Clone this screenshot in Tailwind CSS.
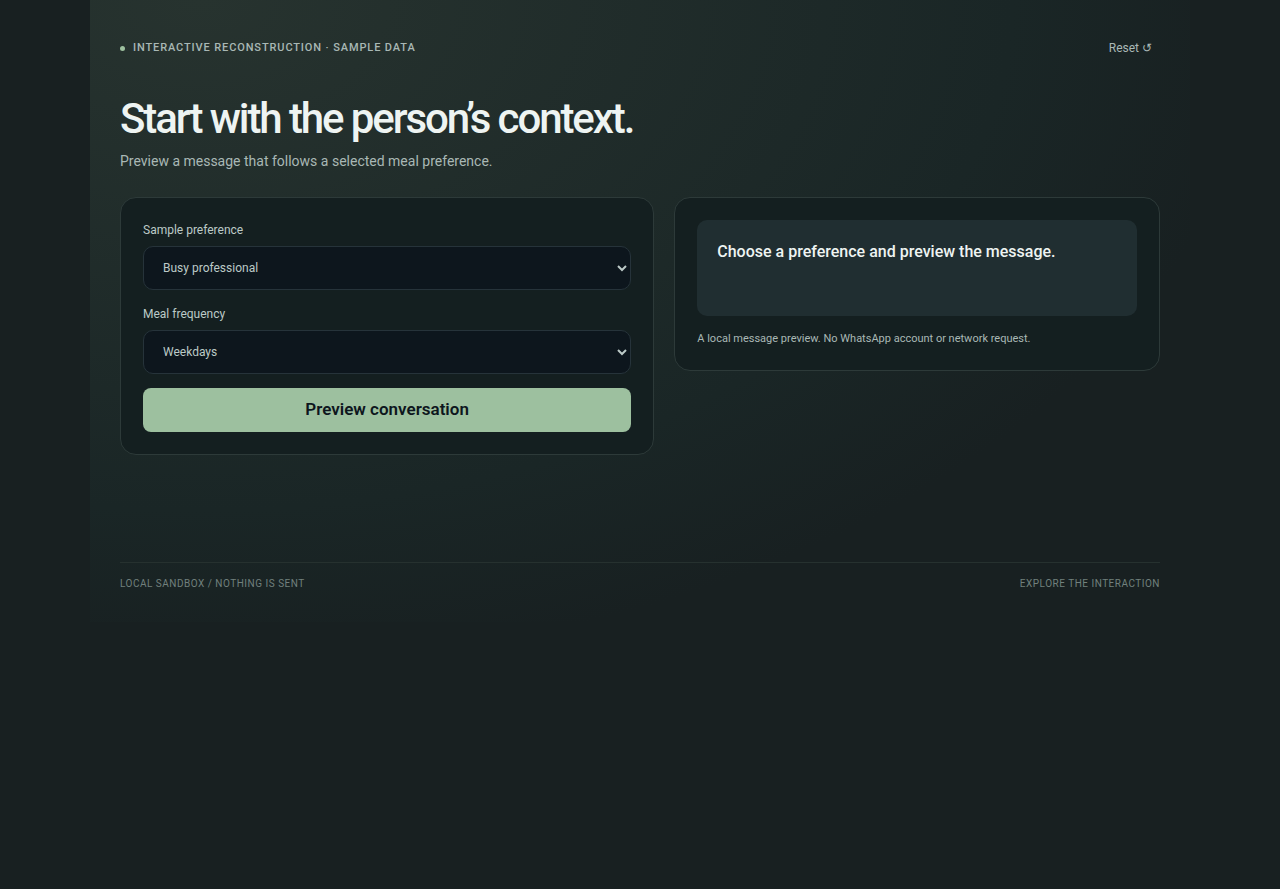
<!DOCTYPE html>
<html lang="en">
<head>
  <meta charset="UTF-8">
  <meta name="viewport" content="width=device-width, initial-scale=1.0">
  <title>Message preview</title>
  <script src="https://cdn.jsdelivr.net/npm/@tailwindcss/browser@4"></script>
</head>
<body class="min-h-screen bg-[#182021] font-['Roboto',sans-serif] text-[#eef4f2]">
  <main class="mx-auto flex min-h-[622px] max-w-[1100px] flex-col bg-[radial-gradient(ellipse_at_10%_0%,#27332f_0%,#1a2626_58%,#182021_76%)] p-[30px]">
    <header class="flex items-center justify-between">
      <p class="flex items-center gap-2 text-[11px] leading-4 font-medium uppercase tracking-[0.08em] text-[#a9b8b5]">
        <span class="size-[5px] rounded-full bg-[#9dc09f]"></span>
        Interactive reconstruction · Sample data
      </p>
      <button type="button" id="reset" class="h-9 px-2 text-xs text-[#a9b8b5]">Reset ↺</button>
    </header>

    <h1 class="mt-[30px] text-[42px] leading-[46px] font-medium tracking-tighter">Start with the person’s context.</h1>
    <p class="mt-[7px] text-sm leading-6 text-[#a9b8b5]">Preview a message that follows a selected meal preference.</p>

    <div class="mt-6 grid items-start gap-5 md:grid-cols-[1.1fr_1fr]">
      <form id="preview-form" class="flex flex-col gap-[14px] rounded-2xl border border-[#2d3a39] bg-[#141f20] p-[22px]">
        <div class="flex flex-col gap-[6px]">
          <label for="preference" class="text-xs leading-5 text-[#bccac7]">Sample preference</label>
          <select id="preference" class="h-11 w-full rounded-[10px] border border-[#26333a] bg-[#0d161d] px-[15px] text-xs text-[#bccac7]">
            <option>Busy professional</option>
            <option>Home cook</option>
          </select>
        </div>
        <div class="flex flex-col gap-[6px]">
          <label for="frequency" class="text-xs leading-5 text-[#bccac7]">Meal frequency</label>
          <select id="frequency" class="h-11 w-full rounded-[10px] border border-[#26333a] bg-[#0d161d] px-[15px] text-xs text-[#bccac7]">
            <option>Weekdays</option>
            <option>Every day</option>
          </select>
        </div>
        <button type="submit" class="h-11 rounded-lg bg-[#9dc09f] text-[17px] font-semibold text-[#0d161d]">Preview conversation</button>
      </form>

      <section class="rounded-2xl border border-[#2d3a39] bg-[#141f20] p-[22px]">
        <p id="message" class="min-h-24 rounded-[10px] bg-[#202e31] p-5 text-base leading-6 font-medium" aria-live="polite">Choose a preference and preview the message.</p>
        <p class="mt-[14px] text-[11px] leading-[18px] text-[#a9b8b5]">A local message preview. No WhatsApp account or network request.</p>
      </section>
    </div>

    <footer class="mt-auto flex justify-between border-t border-[#26312f] pt-[13px] text-[10px] leading-4 uppercase tracking-wider text-[#71807d]">
      <span>Local sandbox / Nothing is sent</span>
      <span>Explore the interaction</span>
    </footer>
  </main>

  <script>
    const form = document.getElementById('preview-form');
    const message = document.getElementById('message');
    const emptyText = message.textContent;

    form.addEventListener('submit', (event) => {
      event.preventDefault();
      message.textContent = `${form.preference.value}: ${form.frequency.value}`;
    });

    document.getElementById('reset').addEventListener('click', () => {
      form.reset();
      message.textContent = emptyText;
    });
  </script>
</body>
</html>
